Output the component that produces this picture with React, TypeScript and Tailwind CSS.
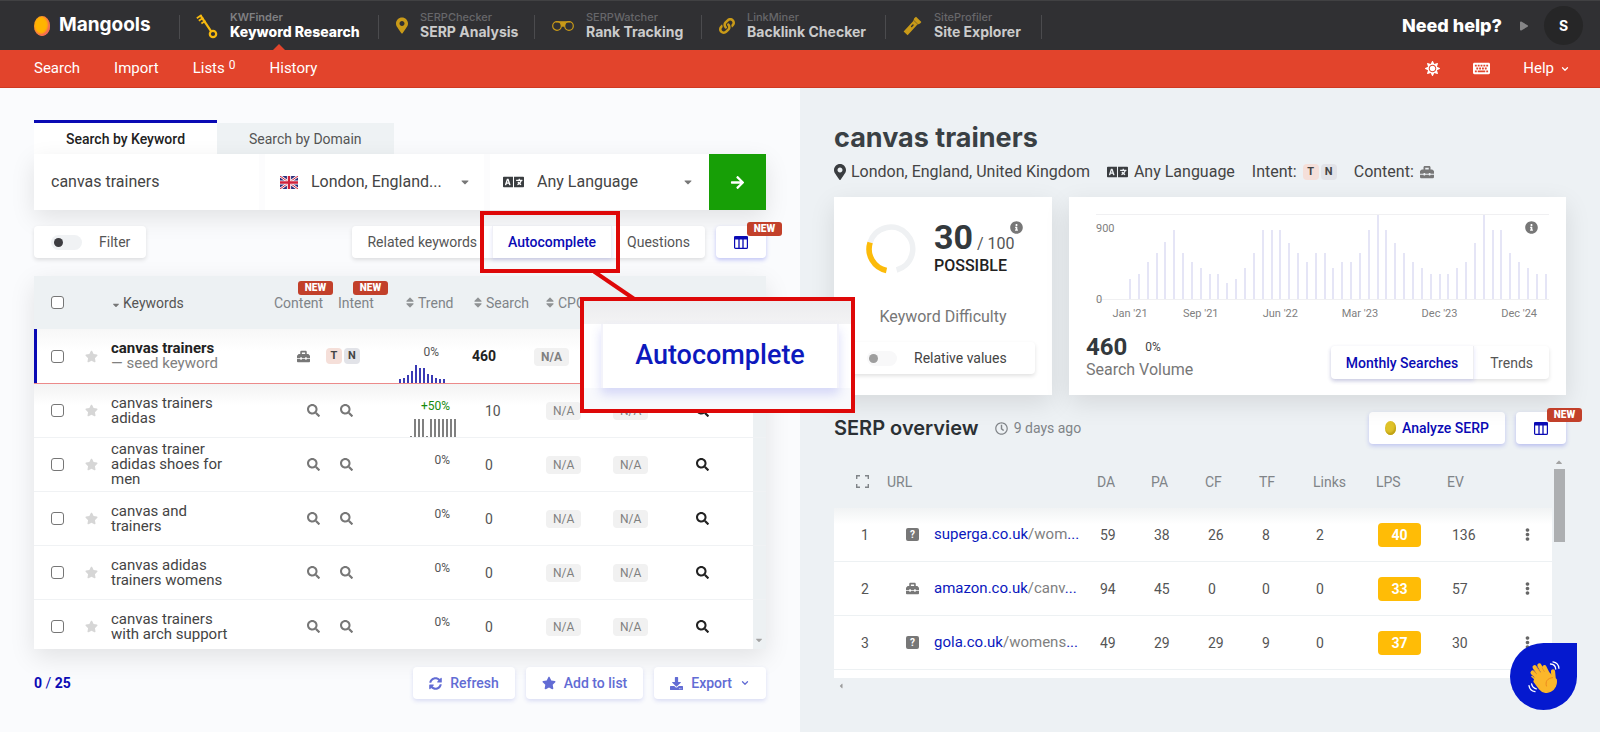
import type { ReactNode } from "react"
import {
  FaArrowRight,
  FaCaretDown,
  FaCaretLeft,
  FaCaretUp,
  FaDownload,
  FaEllipsisV,
  FaInfoCircle,
  FaKeyboard,
  FaLanguage,
  FaLink,
  FaMapMarkerAlt,
  FaPlay,
  FaRegClock,
  FaSearch,
  FaSort,
  FaStar,
  FaSun,
  FaSyncAlt,
  FaToolbox,
} from "react-icons/fa"
import { ChevronDown } from "lucide-react"

const tools = [
  { name: "KWFinder", label: "Keyword Research", icon: <KeyIcon />, width: "w-[132px]", active: true },
  { name: "SERPChecker", label: "SERP Analysis", icon: <FaMapMarkerAlt className="h-[17px] w-3" />, width: "w-[98px]" },
  { name: "SERPWatcher", label: "Rank Tracking", icon: <GlassesIcon />, width: "w-[99px]" },
  { name: "LinkMiner", label: "Backlink Checker", icon: <FaLink className="size-4" />, width: "w-[122px]" },
  { name: "SiteProfiler", label: "Site Explorer", icon: <TorchIcon />, width: "w-[91px]" },
]

const keywords = [
  { text: "canvas trainers adidas", trend: "+50%", search: 10, bars: [1, 18, 18, 18, 1, 18, 18, 18, 18, 18, 18, 18] },
  { text: "canvas trainer adidas shoes for men", trend: "0%", search: 0 },
  { text: "canvas and trainers", trend: "0%", search: 0 },
  { text: "canvas adidas trainers womens", trend: "0%", search: 0 },
  { text: "canvas trainers with arch support", trend: "0%", search: 0 },
]

const seedBars = [4, 5, 8, 12, 18, 15, 15, 9, 8, 5, 4, 4]

const monthly = [
  20, 25, 37, 46, 57, 69, 46, 37, 31, 25, 25, 16, 20, 31, 46, 69, 69, 69, 56, 46, 37, 46, 46, 31,
  37, 37, 46, 69, 84, 69, 56, 46, 37, 31, 25, 25, 25, 31, 37, 56, 84, 69, 69, 46, 37, 31, 25, 25,
]

const monthLabels: Record<number, string> = {
  0: "Jan '21",
  8: "Sep '21",
  17: "Jun '22",
  26: "Mar '23",
  35: "Dec '23",
  44: "Dec '24",
}

const results = [
  { rank: 1, host: "superga.co.uk", path: "/wom", shop: false, stats: [59, 38, 26, 8, 2], lps: 40, ev: 136 },
  { rank: 2, host: "amazon.co.uk", path: "/canv", shop: true, stats: [94, 45, 0, 0, 0], lps: 33, ev: 57 },
  { rank: 3, host: "gola.co.uk", path: "/womens", shop: false, stats: [49, 29, 29, 9, 0], lps: 37, ev: 30 },
]

function KeyIcon() {
  return (
    <svg viewBox="0 0 22 26" className="h-[26px] w-[22px]" fill="none" stroke="currentColor">
      <circle cx="17" cy="21" r="3.2" strokeWidth="2.2" />
      <path d="M15 18.2 4.6 2.6" strokeWidth="2.2" />
      <path d="M5.6 2 .8 5.2M7.4 4.8 2.8 7.8M9.4 7.8 5.4 10.4" strokeWidth="1.8" />
    </svg>
  )
}

function GlassesIcon() {
  return (
    <svg viewBox="0 0 22 12" className="h-3 w-[22px]" fill="none" stroke="currentColor">
      <circle cx="5" cy="6" r="4.3" strokeWidth="1.2" />
      <circle cx="17" cy="6" r="4.3" strokeWidth="1.2" />
      <path d="M8 2h6l-1.4 4.8h-3.2z" fill="currentColor" stroke="none" />
      <path d="M4 1.8h14" strokeWidth="1.2" />
    </svg>
  )
}

function TorchIcon() {
  return (
    <svg viewBox="0 0 19 20" className="h-5 w-[19px]" fill="currentColor">
      <path d="M13 .8 18.4 6l-1.3 1.6-2.9 1.1L4.6 19.2.6 15.4 10.3 5l.9-2.8z" />
      <path d="M8.6 10.6l1.4-1.5" stroke="#303033" strokeWidth="1.4" strokeLinecap="round" />
      <path d="M11 4.6l3.8 3.7" stroke="#303033" strokeWidth=".5" />
    </svg>
  )
}

function ColumnsIcon() {
  return (
    <svg viewBox="0 0 14 13" className="h-[13px] w-3.5" fill="none" stroke="currentColor">
      <rect x=".6" y=".6" width="12.8" height="11.8" rx="1" strokeWidth="1.2" />
      <path d="M0 2h14" strokeWidth="3" />
      <path d="M5 3v9.5M9 3v9.5" strokeWidth="1.3" />
    </svg>
  )
}

function ExpandIcon() {
  return (
    <svg viewBox="0 0 13 13" className="size-[13px]" fill="none" stroke="currentColor" strokeWidth="1.4">
      <path d="M.7 4V.7H4M9 .7h3.3V4M12.3 9v3.3H9M4 12.3H.7V9" />
    </svg>
  )
}

function FlagIcon() {
  return (
    <svg viewBox="0 0 18 13" className="h-[13px] w-[18px] shrink-0">
      <path fill="#2b2f7c" d="M0 0h18v13H0z" />
      <path d="M0 0l18 13M18 0 0 13" stroke="#fff" strokeWidth="2.6" />
      <path d="M0 0l18 13M18 0 0 13" stroke="#d0223c" strokeWidth="1" />
      <path d="M9 0v13M0 6.5h18" stroke="#fff" strokeWidth="4.2" />
      <path d="M9 0v13M0 6.5h18" stroke="#d0223c" strokeWidth="2.4" />
    </svg>
  )
}

function WaveIcon() {
  return (
    <svg viewBox="0 0 32 32" className="size-8" fill="none" strokeLinecap="round" strokeLinejoin="round">
      <g stroke="#fbb72b" strokeWidth="4.2">
        <path d="M13.5 20 4.6 11.6" />
        <path d="M15 18 6.6 6.2" />
        <path d="M18 16.5 11.4 4.4" />
        <path d="M21 15.5 16.4 6.2" />
        <path d="M26 21l-1-10.6" />
      </g>
      <path d="M7.5 18.5 4 15.5M8 14l8-3 5.5 1.5 3.5 4.5 3 1.5c.9 5-1.4 9.6-5.4 11.6-4.2 2-8.4.8-11-2.4L6.2 20.5z" fill="#fbb72b" stroke="#fbb72b" strokeWidth="1.6" />
      <path d="M8.3 12.6 5.6 10M12.3 11.2 9 6.8M16.3 10.5 14.2 7" stroke="#e78d1f" strokeWidth=".7" />
      <path d="M24.6 16.6c-5 .6-7.6 3.6-6.2 8.4" stroke="#ee8a1f" strokeWidth="1" />
      <path d="M22.5 3c3 .1 5 2 5.2 5M25 .9c3.600.6 5.600 2.900 5.900 6.400M1 24.600c.5 3.300 2.600 5.500 6 6.100M3.600 22.800c.5 2.700 2 4.300 4.700 5" stroke="#fff" strokeWidth="1.3" />
    </svg>
  )
}

function NewBadge({ className }: { className: string }) {
  return (
    <span
      className={`absolute z-10 h-3.5 w-[35px] rounded-[3px] bg-[#c2402a] text-center text-[10px] font-black leading-[14px] text-white ${className}`}
    >
      NEW
    </span>
  )
}

function IntentTag({ letter, className }: { letter: string; className: string }) {
  return (
    <span className={`inline-block size-4 rounded text-center text-[11px] font-bold leading-4 text-[#444] ${className}`}>
      {letter}
    </span>
  )
}

function NotAvailable({ bold }: { bold?: boolean }) {
  return (
    <span
      className={`inline-block h-[18px] rounded bg-[#f1f1f1] px-[7px] text-xs leading-[18px] text-[#808080] ${bold ? "font-bold" : ""}`}
    >
      N/A
    </span>
  )
}

function Checkbox({ label }: { label: string }) {
  return (
    <input
      type="checkbox"
      aria-label={label}
      className="block size-[13px] appearance-none rounded-[3px] border border-[#767676] bg-white"
    />
  )
}

function Trend({ value, bars, color, className }: { value: string; bars?: number[]; color: string; className: string }) {
  return (
    <div className={`flex flex-col items-end ${className}`}>
      <span className={`text-xs leading-4 ${value.startsWith("+") ? "text-[#168a0c]" : "text-[#555]"}`}>{value}</span>
      <div className="-mr-1.5 mt-1 flex h-[19px] w-[46px] items-end justify-between">
        {bars?.map((h, i) => <i key={i} className={`w-[2px] ${color}`} style={{ height: h }} />)}
      </div>
    </div>
  )
}

function SoftButton({ children }: { children: ReactNode }) {
  return (
    <button className="flex h-8 items-center rounded bg-white px-4 text-sm font-medium text-[#626cd4] shadow-[0_2px_4px_rgba(90,100,210,0.2)]">
      {children}
    </button>
  )
}

function SortHead({ children }: { children: ReactNode }) {
  return (
    <span className="flex items-center gap-1">
      <FaSort className="h-[13px] w-2 text-[#8f9294]" />
      {children}
    </span>
  )
}

function TopBar() {
  return (
    <header className="flex h-[50px] items-center border-t border-[#414143] bg-[#303033] pl-[34px] pr-[17px] font-['Inter',sans-serif]">
      <a href="#" className="flex w-[145px] items-center gap-[9px] text-[19px] font-bold text-white">
        <span className="h-5 w-4 rounded-[50%] bg-[#ffb400] shadow-[inset_-1px_-1px_2px_1px_#f4635c]" />
        Mangools
      </a>
      <nav className="flex h-full items-center">
        {tools.map((t) => (
          <a
            key={t.name}
            href="#"
            className={`relative flex h-full items-center gap-3 px-[17px] after:absolute after:right-0 after:top-3.5 after:h-6 after:w-px after:bg-[#4b4b4e] ${
              t.active ? "before:absolute before:left-0 before:top-3.5 before:h-6 before:w-px before:bg-[#4b4b4e]" : ""
            }`}
          >
            <span className={t.active ? "text-[#f7b90f]" : "text-[#c99a18]"}>{t.icon}</span>
            <span className={`whitespace-nowrap ${t.width}`}>
              <span className={`block text-[11px] leading-[13px] ${t.active ? "font-semibold text-[#808083]" : "font-medium text-[#67676a]"}`}>
                {t.name}
              </span>
              <span className={`block text-sm leading-4 ${t.active ? "font-extrabold text-white" : "font-bold text-[#cbcbcb]"}`}>
                {t.label}
              </span>
            </span>
            {t.active && (
              <span className="absolute bottom-0 left-1/2 -ml-1.5 border-x-[6px] border-b-[6px] border-x-transparent border-b-[#e2442c]" />
            )}
          </a>
        ))}
      </nav>
      <button className="ml-auto flex items-center gap-[18px] text-[18px] font-extrabold text-white">
        Need help?
        <FaPlay className="h-3 w-2 text-[#858587]" />
      </button>
      <button className="ml-4 size-[39px] rounded-full bg-[#262627] text-sm font-bold text-white">S</button>
    </header>
  )
}

function MenuBar() {
  return (
    <nav className="flex h-[38px] items-center border-b border-[#cf3a22] bg-[#e2442c] pl-[34px] pr-[30px] text-[15px] text-white">
      <div className="flex gap-[34px]">
        <a href="#">Search</a>
        <a href="#">Import</a>
        <a href="#" className="flex gap-1">
          Lists <span className="text-xs leading-4">0</span>
        </a>
        <a href="#">History</a>
      </div>
      <div className="ml-auto flex items-center gap-[33px]">
        <button aria-label="Theme">
          <FaSun className="size-[15px]" />
        </button>
        <button aria-label="Keyboard shortcuts">
          <FaKeyboard className="size-[17px]" />
        </button>
        <button className="flex items-center gap-1.5">
          Help <ChevronDown className="size-2.5" strokeWidth={3} />
        </button>
      </div>
    </nav>
  )
}

function KeywordPanel() {
  return (
    <section className="flex min-h-0 flex-1 flex-col bg-[#fafbfd] px-[34px] pb-[33px] pt-8">
      <div className="flex items-end">
        <button className="h-[34px] border-t-[3px] border-[#0a0ab4] bg-white px-8 text-sm font-medium text-[#222]">
          Search by Keyword
        </button>
        <button className="h-[31px] bg-[#eef2f4] px-8 text-sm text-[#555]">Search by Domain</button>
      </div>

      <form className="flex h-14 shrink-0 bg-white text-base text-[#444] shadow-[0_8px_24px_rgba(0,0,0,0.1)]">
        <input
          aria-label="Keyword"
          defaultValue="canvas trainers"
          className="min-w-0 flex-1 border-r-[6px] border-[#fcfcfd] px-[17px] outline-none"
        />
        <label className="flex min-w-0 flex-1 items-center border-r-[6px] border-[#fcfcfd] pl-[15px] pr-[13px]">
          <FlagIcon />
          <select aria-label="Location" className="ml-[13px] min-w-0 flex-1 appearance-none outline-none">
            <option>London, England...</option>
          </select>
          <FaCaretDown className="size-3 text-[#777]" />
        </label>
        <label className="flex min-w-0 flex-1 items-center pl-[13px] pr-[15px]">
          <FaLanguage className="h-5 w-[21px] text-[#3a3d40]" />
          <select aria-label="Language" className="ml-[13px] min-w-0 flex-1 appearance-none outline-none">
            <option>Any Language</option>
          </select>
          <FaCaretDown className="size-3 text-[#777]" />
        </label>
        <button type="button" aria-label="Find keywords" className="flex w-[57px] items-center justify-center bg-[#179f06] text-white">
          <FaArrowRight className="size-[15px]" />
        </button>
      </form>

      <div className="mt-4 flex h-8 shrink-0 text-sm text-[#555]">
        <label className="flex items-center gap-[17px] rounded bg-white px-4 pl-[17px] shadow-[0_2px_4px_rgba(0,0,0,0.12)]">
          <input
            type="checkbox"
            role="switch"
            className="h-[15px] w-[31px] appearance-none rounded-full bg-[#f0f2f4] before:ml-[3px] before:mt-[3px] before:block before:size-[9px] before:rounded-full before:bg-[#3d3d41]"
          />
          Filter
        </label>
        <div className="ml-auto flex rounded bg-white shadow-[0_2px_4px_rgba(0,0,0,0.12)]">
          <button className="px-[15px]">Related keywords</button>
          <button className="border-x border-[#f0f0f6] px-[15px] font-medium text-[#0a0ab4] shadow-[0_2px_4px_rgba(60,70,230,0.15)]">
            Autocomplete
          </button>
          <button className="px-[15px]">Questions</button>
        </div>
        <button
          aria-label="Choose columns"
          className="relative ml-[11px] flex w-[50px] items-center justify-center rounded bg-white text-[#0a0ab4] shadow-[0_2px_4px_rgba(60,70,230,0.3)]"
        >
          <ColumnsIcon />
          <NewBadge className="-right-4 -top-1" />
        </button>
      </div>

      <div className="mt-[18px] min-h-0 flex-1 overflow-hidden bg-white shadow-[0_8px_24px_rgba(0,0,0,0.1)]">
        <table className="w-full table-fixed border-separate border-spacing-0 text-left text-[15px] text-[#444]">
          <colgroup>
            <col className="w-11" />
            <col className="w-[26px]" />
            <col />
            <col className="w-[52px]" />
            <col className="w-[70px]" />
            <col className="w-[66px]" />
            <col className="w-[72px]" />
            <col className="w-[67px]" />
            <col className="w-[67px]" />
            <col className="w-[85px]" />
            <col className="w-[13px]" />
          </colgroup>
          <thead>
            <tr className="h-[53px] bg-[#edf1f3] text-sm text-[#808488] [&>th]:font-normal">
              <th className="pl-[17px]">
                <Checkbox label="Select all keywords" />
              </th>
              <th />
              <th className="pl-[7px] text-[#555]">
                <span className="flex items-center gap-0.5">
                  <FaCaretDown className="size-2.5 translate-y-0.5 text-[#777]" />
                  Keywords
                </span>
              </th>
              <th className="relative">
                Content
                <NewBadge className="left-6 top-[5px]" />
              </th>
              <th className="relative pl-3">
                Intent
                <NewBadge className="left-[27px] top-[5px]" />
              </th>
              <th className="pl-2.5">
                <SortHead>Trend</SortHead>
              </th>
              <th className="pl-3">
                <SortHead>Search</SortHead>
              </th>
              <th className="pl-3">
                <SortHead>CPC</SortHead>
              </th>
              <th />
              <th />
              <th />
            </tr>
          </thead>
          <tbody>
            <tr className="h-[55px] bg-linear-to-b from-[#f7f7f7] via-white via-40% to-white [&>td]:border-b [&>td]:border-[#ec8a8a]">
              <td className="pl-[17px] shadow-[inset_3px_0_0_#0a0ab4]">
                <Checkbox label="Select canvas trainers" />
              </td>
              <td>
                <FaStar className="mx-auto size-[13px] text-[#d6d6d6]" />
              </td>
              <td className="pl-[7px] leading-[15px]">
                <span className="block font-bold text-[#222]">canvas trainers</span>
                <span className="block text-[#808080]">— seed keyword</span>
              </td>
              <td className="pr-4">
                <FaToolbox className="ml-auto size-[13px] text-[#777]" />
              </td>
              <td>
                <span className="flex gap-0.5">
                  <IntentTag letter="T" className="bg-[#f5dfd9]" />
                  <IntentTag letter="N" className="bg-[#e2e3e8]" />
                </span>
              </td>
              <td className="align-bottom">
                <Trend value="0%" bars={seedBars} color="bg-[#3a3ab4]" className="mr-[23px]" />
              </td>
              <td className="pl-2.5 text-sm font-bold text-[#222]">460</td>
              <td>
                <NotAvailable bold />
              </td>
              <td />
              <td />
              <td className="bg-[#edf1f3]" />
            </tr>
            {keywords.map((k, i) => (
              <tr
                key={k.text}
                className={`h-[54px] [&>td]:border-b [&>td]:border-[#f0f2f4] ${i === 0 ? "bg-linear-to-b from-[#f3f3f3] via-white via-40% to-white" : ""}`}
              >
                <td className="pl-[17px]">
                  <Checkbox label={`Select ${k.text}`} />
                </td>
                <td>
                  <FaStar className="mx-auto size-[13px] text-[#d6d6d6]" />
                </td>
                <td className="pl-[7px]">
                  <span className="block w-[126px] leading-[15px]">{k.text}</span>
                </td>
                <td className="pr-1.5">
                  <FaSearch className="ml-auto size-[13px] text-[#777]" />
                </td>
                <td className="pl-3.5">
                  <FaSearch className="size-[13px] text-[#777]" />
                </td>
                <td className="align-bottom">
                  <Trend value={k.trend} bars={k.bars} color="bg-[#808080]" className="mr-3" />
                </td>
                <td className="pl-[23px] text-sm text-[#555]">{k.search}</td>
                <td className="pl-3">
                  <NotAvailable />
                </td>
                <td className="pl-3">
                  <NotAvailable />
                </td>
                <td className="pl-7">
                  <FaSearch className="size-[13px] text-[#222]" />
                </td>
                <td className="bg-[#edf1f3]" />
              </tr>
            ))}
          </tbody>
        </table>
      </div>

      <div className="relative mt-[18px] flex items-center">
        <FaCaretDown className="absolute -top-8 right-0.5 size-2.5 text-[#a3a3a3]" />
        <span className="mr-auto text-sm text-[#0a0ab4]">
          <b>0</b> / <b>25</b>
        </span>
        <div className="flex gap-[11px]">
          <SoftButton>
            <FaSyncAlt className="mr-2 size-[13px]" /> Refresh
          </SoftButton>
          <SoftButton>
            <FaStar className="mr-2 size-3.5" /> Add to list
          </SoftButton>
          <SoftButton>
            <FaDownload className="mr-2 size-[13px]" /> Export <ChevronDown className="ml-2 size-2.5" strokeWidth={3} />
          </SoftButton>
        </div>
      </div>
    </section>
  )
}

function DifficultyCard() {
  return (
    <div className="relative w-[218px] bg-white px-[17px] pt-[23px] shadow-[0_8px_24px_rgba(0,0,0,0.1)]">
      <div className="flex pl-[15px]">
        <svg viewBox="0 0 50 50" className="mt-1 size-[50px]" fill="none" strokeWidth="5.6">
          <path d="M30.6 46A21.8 21.8 0 1 0 4.1 18.5" stroke="#eff1f3" />
          <path d="M4.1 18.5A21.8 21.8 0 0 0 20.5 46.4" stroke="#fcbb0a" />
        </svg>
        <div className="ml-[18px]">
          <p className="flex items-baseline gap-1 leading-[34px] text-[#33393d]">
            <b className="text-[34px] font-bold">30</b>
            <span className="text-base text-[#555]">/ 100</span>
          </p>
          <p className="text-base font-medium leading-5 text-[#222]">POSSIBLE</p>
        </div>
      </div>
      <FaInfoCircle className="absolute right-[29px] top-6 size-[13px] text-[#777]" />
      <p className="mt-[31px] text-center text-base leading-5 text-[#777]">Keyword Difficulty</p>
      <label className="mt-[15px] flex h-8 items-center gap-[17px] rounded bg-white pl-4 text-sm text-[#444] shadow-[0_2px_4px_rgba(0,0,0,0.12)]">
        <input
          type="checkbox"
          role="switch"
          className="h-[15px] w-[30px] appearance-none rounded-full bg-[#f8f8f9] before:ml-0.5 before:mt-[3px] before:block before:size-[9px] before:rounded-full before:bg-[#9e9e9e]"
        />
        Relative values
      </label>
    </div>
  )
}

function VolumeCard() {
  return (
    <div className="relative flex flex-1 flex-col bg-white px-[17px] pb-4 pt-[17px] shadow-[0_8px_24px_rgba(0,0,0,0.1)]">
      <div className="ml-2.5 flex h-[86px] border-y border-[#f0f0f2] text-[11px] leading-[14px] text-[#808080]">
        <div className="-mb-2 flex w-[33px] flex-col justify-between pt-[7px]">
          <span>900</span>
          <span>0</span>
        </div>
        <div className="mr-0.5 flex flex-1 items-end justify-between">
          {monthly.map((h, i) => (
            <div key={i} className="relative flex h-full w-[2px] items-end">
              <i className="w-full bg-[#e5e5f6]" style={{ height: h }} />
              {monthLabels[i] && (
                <span className="absolute left-1/2 top-full mt-2 -translate-x-1/2 whitespace-nowrap">{monthLabels[i]}</span>
              )}
            </div>
          ))}
        </div>
      </div>
      <FaInfoCircle className="absolute right-7 top-6 size-[13px] bg-white text-[#777]" />
      <div className="mt-auto flex items-end justify-between">
        <div>
          <p className="flex items-center gap-[18px] leading-7 text-[#33393d]">
            <b className="text-2xl leading-7">460</b>
            <span className="text-xs text-[#444]">0%</span>
          </p>
          <p className="text-base leading-[18px] text-[#777]">Search Volume</p>
        </div>
        <div className="flex h-[33px] rounded text-sm shadow-[0_2px_4px_rgba(0,0,0,0.12)]">
          <button className="rounded-l border-r border-[#eeeef2] px-[15px] font-medium text-[#0a0ab4] shadow-[0_2px_4px_rgba(60,70,230,0.15)]">
            Monthly Searches
          </button>
          <button className="px-4 text-[#555]">Trends</button>
        </div>
      </div>
    </div>
  )
}

function SerpPanel() {
  return (
    <section className="flex min-h-0 flex-1 flex-col bg-[#edf1f4] px-[34px] pb-[39px] pt-8">
      <h1 className="font-['Inter',sans-serif] text-[27px] font-bold leading-9 text-[#3a4044]">canvas trainers</h1>
      <p className="mt-1 flex h-6 items-center whitespace-nowrap text-base text-[#444]">
        <FaMapMarkerAlt className="mr-[5px] h-4 w-3 text-[#3a3d40]" />
        London, England, United Kingdom
        <FaLanguage className="ml-[17px] mr-1.5 h-5 w-[21px] text-[#3a3d40]" />
        Any Language
        <span className="ml-[17px] mr-1.5">Intent:</span>
        <IntentTag letter="T" className="mr-0.5 bg-[#f5dfd9]" />
        <IntentTag letter="N" className="bg-[#e2e3e8]" />
        <span className="ml-[17px] mr-1.5">Content:</span>
        <FaToolbox className="size-3.5 text-[#777]" />
      </p>

      <div className="mt-[13px] flex h-[198px] shrink-0 gap-[17px]">
        <DifficultyCard />
        <VolumeCard />
      </div>

      <div className="mt-[17px] flex h-8 shrink-0 items-center">
        <h2 className="font-['Inter',sans-serif] text-xl font-semibold text-[#2b3034]">SERP overview</h2>
        <span className="ml-4 flex items-center gap-1.5 text-sm text-[#808488]">
          <FaRegClock className="size-[13px]" /> 9 days ago
        </span>
        <button className="ml-auto flex h-full items-center gap-1.5 rounded bg-white px-4 text-sm font-medium text-[#0a0ab4] shadow-[0_2px_4px_rgba(60,70,230,0.25)]">
          <span className="h-3.5 w-[11px] rounded-[50%] bg-[#dfc229] shadow-[inset_-1px_-2px_2px_#bd9f14]" />
          Analyze SERP
        </button>
        <button
          aria-label="Choose columns"
          className="relative ml-[11px] flex h-full w-[50px] items-center justify-center rounded bg-white text-[#0a0ab4] shadow-[0_2px_4px_rgba(60,70,230,0.3)]"
        >
          <ColumnsIcon />
          <NewBadge className="-right-4 -top-1" />
        </button>
      </div>

      <div className="mt-[11px] flex min-h-0 flex-1">
        <div className="flex min-w-0 flex-1 flex-col">
          <div className="min-h-0 flex-1 overflow-hidden bg-white">
            <table className="w-full table-fixed border-separate border-spacing-0 text-left text-sm text-[#555]">
              <colgroup>
                <col className="w-[53px]" />
                <col />
                <col className="w-[54px]" />
                <col className="w-[54px]" />
                <col className="w-[54px]" />
                <col className="w-[54px]" />
                <col className="w-[63px]" />
                <col className="w-[71px]" />
                <col className="w-[62px]" />
                <col className="w-[43px]" />
              </colgroup>
              <thead>
                <tr className="h-[53px] bg-[#edf1f4] text-[#808488] [&>th]:font-normal">
                  <th className="pl-[22px]">
                    <ExpandIcon />
                  </th>
                  <th>URL</th>
                  <th>DA</th>
                  <th>PA</th>
                  <th>CF</th>
                  <th>TF</th>
                  <th>Links</th>
                  <th>LPS</th>
                  <th>EV</th>
                  <th />
                </tr>
              </thead>
              <tbody>
                {results.map((r, i) => (
                  <tr
                    key={r.rank}
                    className={`h-[54px] [&>td]:border-b [&>td]:border-[#edf1f3] ${i === 0 ? "bg-linear-to-b from-[#f1f3f4] via-white via-30% to-white" : ""}`}
                  >
                    <td className="pl-[27px]">{r.rank}</td>
                    <td className="pl-[19px]">
                      <span className="flex items-center gap-[15px] text-[15px]">
                        {r.shop ? (
                          <FaToolbox className="size-[13px] text-[#777]" />
                        ) : (
                          <span className="size-[13px] rounded-xs bg-[#777] text-center text-[10px] font-bold leading-[13px] text-white">?</span>
                        )}
                        <a href="#" className="whitespace-nowrap text-[#0a18bd]">
                          {r.host}
                          <span className="text-[#808080]">{r.path}</span>...
                        </a>
                      </span>
                    </td>
                    {r.stats.map((n, j) => (
                      <td key={j} className="pl-[3px]">
                        {n}
                      </td>
                    ))}
                    <td className="pl-0.5">
                      <span className="block h-6 w-[43px] rounded bg-[#ffbc06] text-center font-bold leading-6 text-white">{r.lps}</span>
                    </td>
                    <td className="pl-[5px]">{r.ev}</td>
                    <td className="pl-3">
                      <FaEllipsisV className="size-[13px] text-[#666]" />
                    </td>
                  </tr>
                ))}
              </tbody>
            </table>
          </div>
          <div className="flex h-[15px] items-center pl-[3px]">
            <FaCaretLeft className="size-2 text-[#9c9c9c]" />
          </div>
        </div>
        <div className="flex w-3.5 flex-col items-center pt-0.5">
          <FaCaretUp className="size-2.5 text-[#a3a3a3]" />
          <span className="mt-0.5 h-[73px] w-[11px] bg-[#adafb1]" />
        </div>
      </div>
    </section>
  )
}

function Callout() {
  return (
    <div className="pointer-events-none absolute left-0 top-0 z-20">
      <svg className="absolute left-[590px] top-[270px] h-8 w-12" viewBox="0 0 48 32">
        <path d="M4 1.5 45 29.5" stroke="#de0808" strokeWidth="4" />
      </svg>
      <div className="absolute left-[480px] top-[211px] h-[62px] w-[140px] border-4 border-[#de0808]" />
      <div className="absolute left-[580px] top-[297px] flex h-[116px] w-[275px] flex-col border-4 border-[#de0808] bg-[#f8f9fc]">
        <div className="h-[23px] bg-linear-to-b from-[#ececee] to-[#f3f3f4]" />
        <div className="flex h-16 bg-white pl-[17px] pr-3">
          <div className="flex-1 border-x-2 border-[#f3f3fa] text-center text-[27px] font-medium leading-[62px] text-[#0d19bd] shadow-[0_6px_10px_rgba(70,80,230,0.2)]">
            Autocomplete
          </div>
        </div>
      </div>
    </div>
  )
}

export default function App() {
  return (
    <div className="relative flex h-screen flex-col overflow-hidden font-['Roboto',sans-serif]">
      <TopBar />
      <MenuBar />
      <main className="flex min-h-0 flex-1">
        <KeywordPanel />
        <SerpPanel />
      </main>
      <Callout />
      <button
        aria-label="Open chat"
        className="fixed bottom-[22px] right-[23px] z-30 flex size-[67px] items-center justify-center rounded-full rounded-tr-none bg-[#0519cf]"
      >
        <WaveIcon />
      </button>
    </div>
  )
}
